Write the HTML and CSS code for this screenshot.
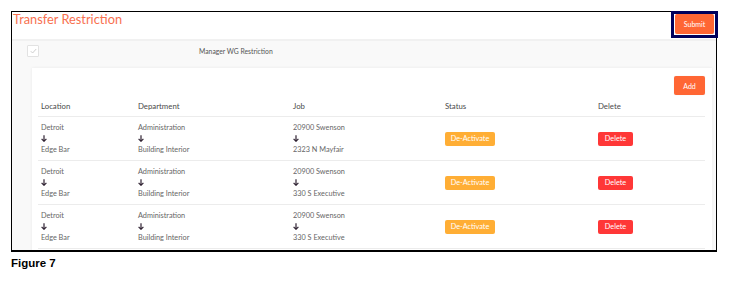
FILE: index.html
```html
<!DOCTYPE html>
<html lang="en">
<head>
  <meta charset="UTF-8">
  <title>Transfer Restriction</title>
  <link rel="stylesheet" href="styles.css">
</head>
<body>
  <div class="frame">
    <div class="top-bar">
      <div class="page-title">Transfer Restriction</div>
      <div class="submit-mark">
        <button class="btn btn-orange btn-submit">Submit</button>
      </div>
    </div>

    <div class="panel">
      <div class="option-row">
        <span class="check-box">
          <svg width="7" height="6" viewBox="0 0 7 6"><polyline points="0.8,3.2 2.6,5 6.2,1" fill="none" stroke="#c8c8c8" stroke-width="0.9"/></svg>
        </span>
        <span class="option-label">Manager WG Restriction</span>
      </div>

      <div class="card">
        <div class="card-tools">
          <button class="btn btn-orange btn-add">Add</button>
        </div>

        <div class="grid head-row">
          <div>Location</div>
          <div>Department</div>
          <div>Job</div>
          <div>Status</div>
          <div>Delete</div>
        </div>

        <div class="grid data-row">
          <div>Detroit<br><span class="arrow"><svg width="6" height="7" viewBox="0 0 6 7"><path d="M3 0.3V6.3M0.6 3.9L3 6.3L5.4 3.9" fill="none" stroke="#2f2232" stroke-width="1.2"/></svg></span><br>Edge Bar</div>
          <div>Administration<br><span class="arrow"><svg width="6" height="7" viewBox="0 0 6 7"><path d="M3 0.3V6.3M0.6 3.9L3 6.3L5.4 3.9" fill="none" stroke="#2f2232" stroke-width="1.2"/></svg></span><br>Building Interior</div>
          <div>20900 Swenson<br><span class="arrow"><svg width="6" height="7" viewBox="0 0 6 7"><path d="M3 0.3V6.3M0.6 3.9L3 6.3L5.4 3.9" fill="none" stroke="#2f2232" stroke-width="1.2"/></svg></span><br>2323 N Mayfair</div>
          <div><button class="btn btn-status">De-Activate</button></div>
          <div><button class="btn btn-delete">Delete</button></div>
        </div>

        <div class="grid data-row">
          <div>Detroit<br><span class="arrow"><svg width="6" height="7" viewBox="0 0 6 7"><path d="M3 0.3V6.3M0.6 3.9L3 6.3L5.4 3.9" fill="none" stroke="#2f2232" stroke-width="1.2"/></svg></span><br>Edge Bar</div>
          <div>Administration<br><span class="arrow"><svg width="6" height="7" viewBox="0 0 6 7"><path d="M3 0.3V6.3M0.6 3.9L3 6.3L5.4 3.9" fill="none" stroke="#2f2232" stroke-width="1.2"/></svg></span><br>Building Interior</div>
          <div>20900 Swenson<br><span class="arrow"><svg width="6" height="7" viewBox="0 0 6 7"><path d="M3 0.3V6.3M0.6 3.9L3 6.3L5.4 3.9" fill="none" stroke="#2f2232" stroke-width="1.2"/></svg></span><br>330 S Executive</div>
          <div><button class="btn btn-status">De-Activate</button></div>
          <div><button class="btn btn-delete">Delete</button></div>
        </div>

        <div class="grid data-row">
          <div>Detroit<br><span class="arrow"><svg width="6" height="7" viewBox="0 0 6 7"><path d="M3 0.3V6.3M0.6 3.9L3 6.3L5.4 3.9" fill="none" stroke="#2f2232" stroke-width="1.2"/></svg></span><br>Edge Bar</div>
          <div>Administration<br><span class="arrow"><svg width="6" height="7" viewBox="0 0 6 7"><path d="M3 0.3V6.3M0.6 3.9L3 6.3L5.4 3.9" fill="none" stroke="#2f2232" stroke-width="1.2"/></svg></span><br>Building Interior</div>
          <div>20900 Swenson<br><span class="arrow"><svg width="6" height="7" viewBox="0 0 6 7"><path d="M3 0.3V6.3M0.6 3.9L3 6.3L5.4 3.9" fill="none" stroke="#2f2232" stroke-width="1.2"/></svg></span><br>330 S Executive</div>
          <div><button class="btn btn-status">De-Activate</button></div>
          <div><button class="btn btn-delete">Delete</button></div>
        </div>
      </div>
    </div>
  </div>

  <div class="caption">Figure 7</div>
</body>
</html>
```

FILE: styles.css
```css
body {
  margin: 0;
  padding: 11px 0 0 11px;
  background: #ffffff;
  font-family: Lato, "Open Sans", sans-serif;
  color: #666;
}

.frame {
  width: 704px;
  height: 238px;
  border: 1px solid #000;
  border-bottom-width: 2px;
  display: flex;
  flex-direction: column;
}

.top-bar {
  height: 27px;
  flex: none;
  display: flex;
  justify-content: space-between;
  align-items: flex-start;
  border-bottom: 2px solid #f1f1f1;
  background: #fff;
}

.page-title {
  color: #f8704f;
  font-size: 12.8px;
  font-weight: 400;
  padding-left: 1px;
  line-height: 14px;
}

.submit-mark {
  margin: -1px -2px 0 0;
  border: 3px solid #00005c;
  padding: 0 1px 1px 1px;
  display: flex;
}

.btn {
  border: none;
  border-radius: 2px;
  color: #fff;
  font-family: Lato, "Open Sans", sans-serif;
  font-size: 7px;
  padding: 0;
  cursor: pointer;
}

.btn-orange {
  background: #ff6634;
  box-shadow: 0 0 1px rgba(0,0,0,0.15);
}

.btn-submit {
  width: 39px;
  height: 20px;
}

.panel {
  flex: 1;
  overflow: hidden;
  background: #f9f9f9;
}

.option-row {
  display: flex;
  align-items: center;
  height: 15px;
  margin-top: 2px;
  padding-left: 15px;
}

.check-box {
  width: 10px;
  height: 10px;
  border: 1px solid #e2e2e2;
  border-radius: 1px;
  background: #fff;
  display: flex;
  align-items: center;
  justify-content: center;
}

.option-label {
  margin-left: 160px;
  font-size: 6.8px;
  color: #555;
}

.card {
  margin: 10px 4px 0 20px;
  background: #fff;
  box-shadow: 0 0 3px rgba(0,0,0,0.07);
  padding: 8px 7px 10px 6px;
}

.card-tools {
  display: flex;
  justify-content: flex-end;
}

.btn-add {
  width: 31px;
  height: 19px;
}

.grid {
  display: grid;
  grid-template-columns: 97px 155px 152px 153px 1fr;
  border-bottom: 1px solid #ececec;
}

.grid > div {
  padding-left: 3px;
}

.head-row {
  height: 21px;
  align-items: center;
  font-size: 7.8px;
  color: #4a4a4a;
}

.data-row {
  align-items: center;
  font-size: 7.3px;
  line-height: 11px;
  padding: 5px 0 5px 0;
}

.arrow {
  display: inline-flex;
  align-items: center;
  height: 11px;
  vertical-align: top;
}

.btn-status {
  background: #ffae35;
  width: 50px;
  height: 14px;
  font-size: 7.3px;
}

.btn-delete {
  background: #ff3737;
  width: 35px;
  height: 14px;
  font-size: 7.3px;
}

.caption {
  margin-top: 5px;
  font-family: "Liberation Sans", Arial, sans-serif;
  font-weight: bold;
  font-size: 11.5px;
  color: #000;
}
```
